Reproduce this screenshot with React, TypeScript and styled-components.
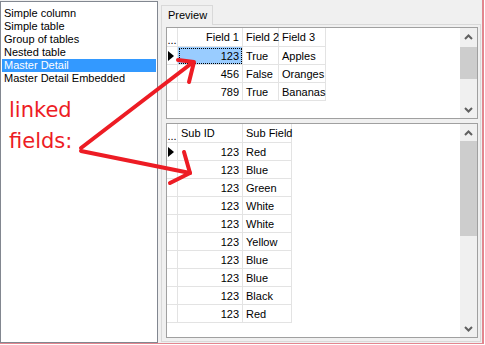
import React from 'react';
import styled, {createGlobalStyle} from 'styled-components';

/**
 * * Global
 */
const GlobalStyle = createGlobalStyle`
  *, *::before, *::after { box-sizing: border-box; }
  html, body { margin: 0; padding: 0; background: #ffffff; }
  body { font-family: 'Liberation Sans', Arial, sans-serif; font-size: 11px; color: #000; }
`;

const PINK = '#e3868f';
const RED = '#ed1c24';

/**
 * * Window frame
 */
const Window = styled.div`
  position: relative;
  display: flex;
  width: 484px;
  height: 344px;
  background: #f0f0f0;
  border-right: 2px solid ${PINK};
  border-bottom: 1px solid ${PINK};
  overflow: hidden;
`;

const ListBox = styled.ul`
  margin: 1px 0 0 0;
  padding: 5px 1px 0 1px;
  list-style: none;
  width: 158px;
  height: 342px;
  background: #fff;
  border: 1px solid #828790;
  flex-shrink: 0;
`;

const ListItem = styled.li<{$selected?: boolean}>`
  height: 13px;
  line-height: 13px;
  padding-left: 2px;
  white-space: nowrap;
  background: ${p => (p.$selected ? '#3399ff' : 'transparent')};
  color: ${p => (p.$selected ? '#fff' : '#000')};
`;

const Splitter = styled.div`
  width: 3px;
  flex-shrink: 0;
`;

const RightPane = styled.div`
  flex: 1;
  display: flex;
  flex-direction: column;
  padding: 5px 1px 1px 0;
`;

const TabStrip = styled.div`
  display: flex;
  height: 19px;
`;

const Tab = styled.div`
  width: 52px;
  height: 20px;
  padding-left: 6px;
  line-height: 18px;
  background: #f0f0f0;
  border: 1px solid #d9d9d9;
  border-bottom: none;
  position: relative;
  z-index: 1;
`;

const TabSheet = styled.div`
  flex: 1;
  display: flex;
  flex-direction: column;
  gap: 4px;
  padding: 2px 2px 3px 4px;
  border: 1px solid #d9d9d9;
  background: #f0f0f0;
`;

/**
 * * Data grid
 */
const GridFrame = styled.div<{$h?: number}>`
  display: flex;
  ${p => (p.$h ? `height: ${p.$h}px; flex-shrink: 0;` : 'flex: 1;')}
  border: 1px solid #a0a0a0;
  background: #fff;
`;

const GridBody = styled.div`
  flex: 1;
  overflow: hidden;
`;

const Row = styled.div<{$cols: string; $h: number}>`
  display: grid;
  grid-template-columns: ${p => p.$cols};
  height: ${p => p.$h}px;
`;

const Cell = styled.div<{$right?: boolean; $sel?: boolean}>`
  border-right: 1px solid #e3e3e3;
  border-bottom: 1px solid #e3e3e3;
  padding: ${p => (p.$right ? '0 3px 0 0' : '0 0 0 3px')};
  display: flex;
  align-items: center;
  justify-content: ${p => (p.$right ? 'flex-end' : 'flex-start')};
  white-space: nowrap;
  background: ${p => (p.$sel ? '#99ccff' : 'transparent')};
  outline: ${p => (p.$sel ? '1px dotted #000' : 'none')};
  outline-offset: -2px;
`;

const Indicator = styled.div<{$header?: boolean}>`
  border-right: 1px solid #e3e3e3;
  border-bottom: 1px solid #e3e3e3;
  display: flex;
  align-items: ${p => (p.$header ? 'flex-end' : 'center')};
  justify-content: center;
  line-height: 8px;
  font-size: 11px;
  padding-bottom: ${p => (p.$header ? '2px' : '0')};
`;

const Pointer = styled.div`
  width: 0;
  height: 0;
  border-top: 5px solid transparent;
  border-bottom: 5px solid transparent;
  border-left: 6px solid #000;
  margin-left: -2px;
`;

const ScrollBar = styled.div`
  width: 17px;
  display: flex;
  flex-direction: column;
  background: #f0f0f0;
`;

const ScrollButton = styled.div`
  height: 17px;
  display: flex;
  align-items: center;
  justify-content: center;
`;

const Track = styled.div`
  flex: 1;
`;

const Thumb = styled.div<{$top: number; $h: number}>`
  margin-top: ${p => p.$top}px;
  height: ${p => p.$h}px;
  background: #cdcdcd;
`;

const Chevron = ({up}: {up?: boolean}) => (
  <svg width="9" height="6" viewBox="0 0 9 6">
    <polyline
      points={up ? '1,5 4.5,1.5 8,5' : '1,1 4.5,4.5 8,1'}
      fill="none"
      stroke="#606060"
      strokeWidth="2"
    />
  </svg>
);

type Col = {title: string; right?: boolean};

const Grid = ({
  cols,
  widths,
  rows,
  height,
  thumb,
}: {
  cols: Col[];
  widths: string;
  rows: string[][];
  height?: number;
  thumb: [number, number];
}) => (
  <GridFrame $h={height}>
    <GridBody>
      <Row $cols={widths} $h={19}>
        <Indicator $header>...</Indicator>
        {cols.map(c => (
          <Cell key={c.title} $right={c.right}>
            {c.title}
          </Cell>
        ))}
      </Row>
      {rows.map((r, i) => (
        <Row key={i} $cols={widths} $h={18}>
          <Indicator>{i === 0 && <Pointer />}</Indicator>
          {r.map((v, j) => (
            <Cell key={j} $right={j === 0} $sel={height !== undefined && i === 0 && j === 0}>
              {v}
            </Cell>
          ))}
        </Row>
      ))}
    </GridBody>
    <ScrollBar>
      <ScrollButton>
        <Chevron up />
      </ScrollButton>
      <Track>
        <Thumb $top={thumb[0]} $h={thumb[1]} />
      </Track>
      <ScrollButton>
        <Chevron />
      </ScrollButton>
    </ScrollBar>
  </GridFrame>
);

/**
 * * Annotation overlay
 */
const Annotation = styled.div`
  position: absolute;
  left: 9px;
  top: 95px;
  font-family: 'DejaVu Sans', sans-serif;
  font-size: 21px;
  line-height: 31px;
  color: ${RED};
  pointer-events: none;
`;

const ArrowLayer = styled.svg`
  position: absolute;
  left: 0;
  top: 0;
  pointer-events: none;
`;

const items = [
  'Simple column',
  'Simple table',
  'Group of tables',
  'Nested table',
  'Master Detail',
  'Master Detail Embedded',
];

const master = [
  ['123', 'True', 'Apples'],
  ['456', 'False', 'Oranges'],
  ['789', 'True', 'Bananas'],
];

const detail = ['Red', 'Blue', 'Green', 'White', 'White', 'Yellow', 'Blue', 'Blue', 'Black', 'Red'].map(c => [
  '123',
  c,
]);

const App = () => {
  return (
    <>
      <GlobalStyle />
      <Window>
        <ListBox>
          {items.map(t => (
            <ListItem key={t} $selected={t === 'Master Detail'}>
              {t}
            </ListItem>
          ))}
        </ListBox>
        <Splitter />
        <RightPane>
          <TabStrip>
            <Tab>Preview</Tab>
          </TabStrip>
          <TabSheet>
            <Grid
              height={92}
              widths="11px 65px 36px 47px"
              cols={[{title: 'Field 1', right: true}, {title: 'Field 2'}, {title: 'Field 3'}]}
              rows={master}
              thumb={[2, 32]}
            />
            <Grid
              widths="11px 65px 49px"
              cols={[{title: 'Sub ID'}, {title: 'Sub Field'}]}
              rows={detail}
              thumb={[0, 95]}
            />
          </TabSheet>
        </RightPane>

        <Annotation>
          linked
          <br />
          fields:
        </Annotation>
        <ArrowLayer width="485" height="345" viewBox="0 0 485 345">
          <g fill="none" stroke={RED} strokeWidth="4" strokeLinecap="round" strokeLinejoin="round">
            <polyline points="81,148 192,63" />
            <polyline points="178,60 194,62 189,82" />
            <polyline points="81,151 190,173" />
            <polyline points="184,152 190,173 170,183" />
          </g>
        </ArrowLayer>
      </Window>
    </>
  );
};

export default App;
